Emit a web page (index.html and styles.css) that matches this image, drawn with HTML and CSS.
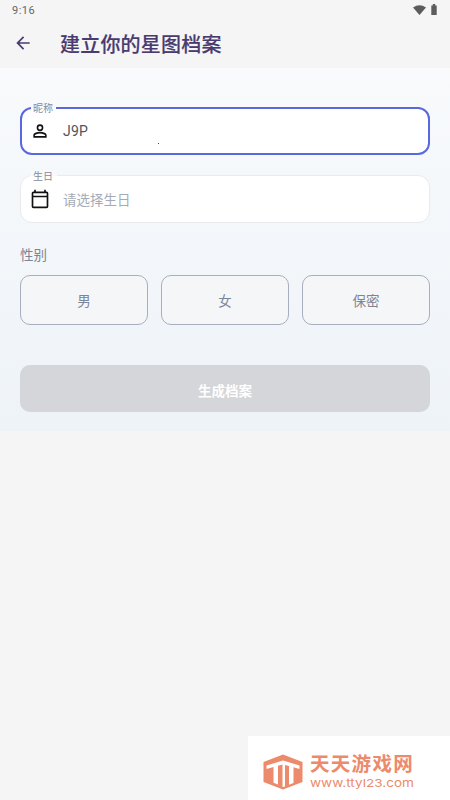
FILE: index.html
```html
<!DOCTYPE html>
<html lang="zh-CN">
<head>
<meta charset="utf-8">
<title>建立你的星图档案</title>
<link rel="stylesheet" href="styles.css">
</head>
<body>
<div class="status">
  <span>9:16</span>
  <svg class="status-icons" width="28" height="14" viewBox="0 0 28 14"><path d="M0 4.500Q6.500 -.2 13 4.500L6.500 12Z"/><path d="M18.300 2.500h1.500V1h2.400v1.500h1.500V12h-5.400z"/></svg>
</div>
<header class="appbar">
  <svg class="back" width="20" height="20" viewBox="0 0 24 24"><path d="M20 11H7.800l5.600-5.600L12 4l-8 8 8 8 1.400-1.400L7.800 13H20z"/></svg>
  <h1>建立你的星图档案</h1>
</header>
<main class="panel">
  <label class="field focused">
    <span class="legend">昵称</span>
    <svg class="icon" viewBox="0 0 24 24"><path d="M12 5.900a2.100 2.100 0 1 1 0 4.200 2.100 2.100 0 0 1 0-4.200m0 9c3 0 6.100 1.500 6.100 2.100v1.100H5.900V17c0-.6 3.100-2.100 6.100-2.100M12 4a4 4 0 1 0 0 8 4 4 0 0 0 0-8m0 9c-2.700 0-8 1.300-8 4v3h16v-3c0-2.700-5.300-4-8-4"/></svg>
    <span class="value">J9P</span>
    <i class="dot"></i>
  </label>
  <label class="field">
    <span class="legend">生日</span>
    <svg class="icon" viewBox="0 0 24 24"><path d="M20 3h-1V1h-2v2H7V1H5v2H4a2 2 0 0 0-2 2v16a2 2 0 0 0 2 2h16a2 2 0 0 0 2-2V5a2 2 0 0 0-2-2m0 18H4V10h16zm0-13H4V5h16z"/></svg>
    <span class="value hint">请选择生日</span>
  </label>
  <div class="caption">性别</div>
  <div class="options">
    <button>男</button><button>女</button><button>保密</button>
  </div>
  <button class="submit">生成档案</button>
</main>
<footer class="brand">
  <svg class="logo" width="40" height="36" viewBox="0 0 40 36"><path class="hex" d="M20 .5 39.500 8V28L20 35.500 .5 28V8Z"/><path class="bars" d="M3.500 11.500 20 6.500 36.500 11.500V15L30.500 13.300V29L26 30.700V12L22 11V32.500L19.500 33V10.500L15 11.700V30.500L10.500 28.800V13L3.500 15Z"/></svg>
  <div class="brand-text">
    <div class="brand-name">天天游戏网</div>
    <svg class="brand-url" width="106" height="14"><text x="0" y="11" textLength="104" lengthAdjust="spacingAndGlyphs">www.ttyl23.com</text></svg>
  </div>
</footer>
</body>
</html>
```
FILE: styles.css
```css
* { box-sizing: border-box; }
body {
  margin: 0;
  height: 800px;
  display: flex;
  flex-direction: column;
  overflow: hidden;
  background: #f5f5f5;
  font-family: Roboto, "Noto Sans CJK SC", sans-serif;
}
.status {
  height: 20px;
  padding: 0 9px 0 12px;
  display: flex;
  justify-content: space-between;
  align-items: center;
  font-size: 11px;
  letter-spacing: .5px;
  color: #666;
}
.status-icons { fill: #5c5c5c; }
.appbar {
  height: 48px;
  padding: 0 13px 2px;
  display: flex;
  align-items: center;
  gap: 27px;
}
.back { fill: #493b70; }
h1 { margin: 4px 0 0; font-size: 20px; line-height: 28px; font-weight: 500; color: #493b70; letter-spacing: .2px; -webkit-text-stroke: .15px #493b70; }
.panel {
  height: 363px;
  padding: 39px 20px 0;
  background: linear-gradient(#f8fafc, #eef3f8);
}
.field {
  position: relative;
  height: 48px;
  margin-bottom: 20px;
  display: flex;
  align-items: center;
  border: 1px solid #e8eaed;
  border-radius: 12px;
  background: #fff;
}
.focused { border: 2px solid #5a68dd; }
.legend {
  position: absolute;
  left: 9px;
  top: -6px;
  padding: 0 4px 0 3px;
  font-size: 10px;
  line-height: 14px;
  color: #858b9d;
  background: linear-gradient(#f7f9fb 40%, #fff 40%);
}
.focused .legend { left: 9px; top: -7px; padding: 0 3px 0 2px; }
.icon { width: 20px; height: 20px; margin-left: 9px; fill: #111; }
.focused .icon { margin-left: 8px; }
.value { margin-left: 13px; font-size: 14px; letter-spacing: .2px; color: #50545b; }
.hint { font-size: 13.5px; letter-spacing: 0; color: #a5abb6; }
.dot { position: absolute; left: 136px; top: 34px; width: 1px; height: 1px; background: #703050; }
.caption { margin-top: 22px; font-size: 13.5px; line-height: 20px; color: #7c8497; }
.options { display: flex; gap: 13px; margin-top: 10px; }
.options button {
  flex: 1;
  height: 50px;
  border: 1px solid #a8aebd;
  border-radius: 10px;
  background: #f4f6f8;
  font: 13.5px Roboto, "Noto Sans CJK SC", sans-serif;
  color: #7c8497;
}
.submit {
  width: 100%;
  height: 47px;
  margin-top: 40px;
  padding-top: 3px;
  border: 0;
  border-radius: 10px;
  background: #d4d6d9;
  color: #fff;
  font: bold 13.5px Roboto, "Noto Sans CJK SC", sans-serif;
}
.brand {
  width: 202px;
  height: 64px;
  margin: auto 0 0 auto;
  padding: 7px 0 0 15px;
  display: flex;
  align-items: center;
  gap: 7px;
  background: #fff;
}
.hex, .brand-url text { fill: #ed8a6c; }
.bars { fill: #fff; }
.brand-name { font-size: 19.5px; letter-spacing: 1.3px; line-height: 22px; white-space: nowrap; font-weight: 700; color: #ed8a6c; }
.brand-url { display: block; }
.brand-url text { font: 11px Inter, sans-serif; }
```
